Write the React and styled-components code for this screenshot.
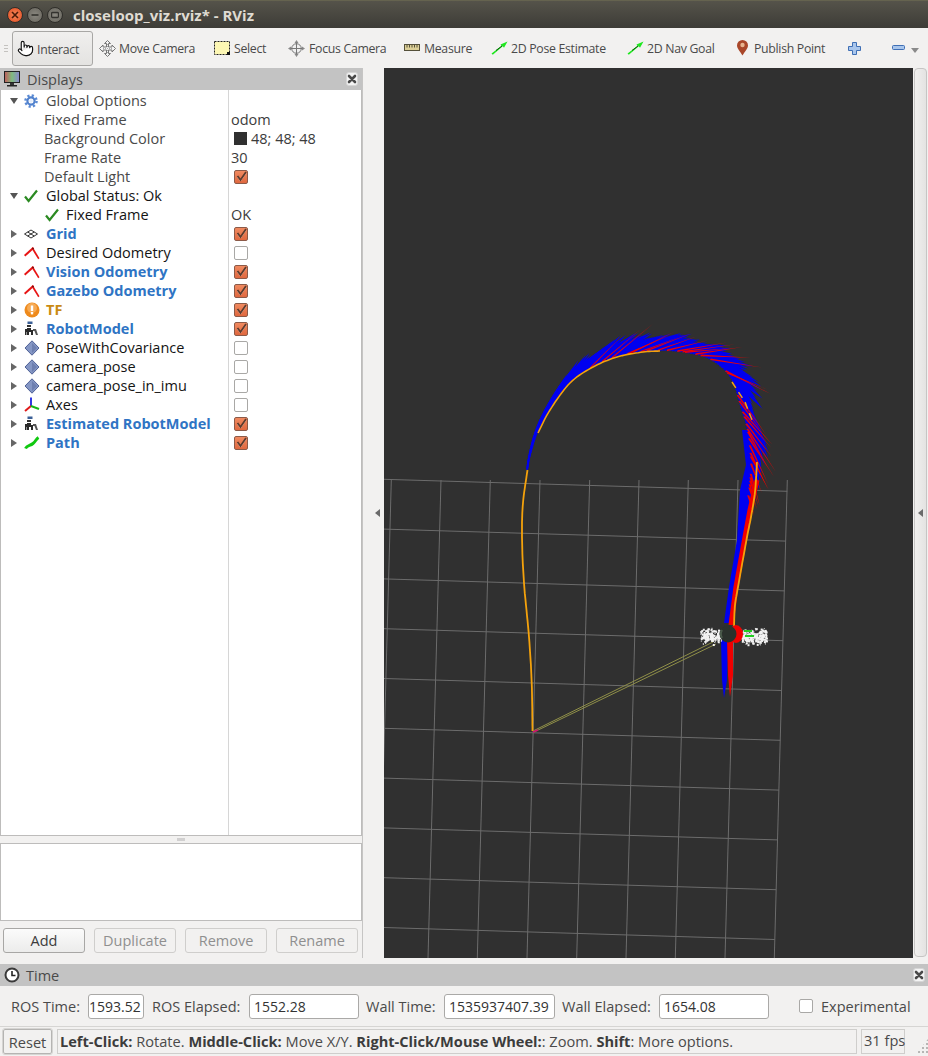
import React from "react";
import styled, { createGlobalStyle } from "styled-components";
import { Pointer } from "lucide-react";

const FONT = `"Open Sans", "Noto Sans", "Liberation Sans", sans-serif`;

const GlobalStyle = createGlobalStyle`
  html, body { margin: 0; padding: 0; background: #f2f1f0; }
  body { font-family: ${FONT}; font-size: 14.5px; color: #3c3c3c; }
`;

/* ---------- small drawn icons ---------- */

const Svg = ({ w = 14, h = 14, children }) => (
  <svg width={w} height={h} viewBox={`0 0 ${w} ${h}`} style={{ display: "block", flex: "none" }}>
    {children}
  </svg>
);

const CloseGlyph = () => (
  <Svg w={12} h={12}>
    <path d="M3 3l6 6M9 3l-6 6" stroke="#4a4a4a" strokeWidth="2.6" strokeLinecap="round" />
  </Svg>
);

const MonitorIcon = () => (
  <Svg w={17} h={17}>
    <defs>
      <linearGradient id="scr" x1="0" x2="1" y1="0" y2="0">
        <stop offset="0" stopColor="#c25b5b" />
        <stop offset="0.5" stopColor="#7fbb7f" />
        <stop offset="1" stopColor="#8a86d0" />
      </linearGradient>
    </defs>
    <rect x="0.5" y="0.5" width="15" height="11" fill="url(#scr)" stroke="#222" />
    <rect x="6" y="12" width="4" height="2" fill="#333" />
    <rect x="3" y="14" width="10" height="1.5" fill="#222" />
  </Svg>
);

const GearIcon = () => (
  <Svg>
    <circle cx="7" cy="7" r="5.6" fill="none" stroke="#5a8ad4" strokeWidth="2.4" strokeDasharray="2.2 2.2" />
    <circle cx="7" cy="7" r="3.6" fill="none" stroke="#4f80cc" strokeWidth="2.2" />
    <circle cx="7" cy="7" r="1.8" fill="#e4ecf9" />
  </Svg>
);

const TickIcon = () => (
  <Svg>
    <path d="M1 7.5l3.6 4.5L13 1.5" fill="none" stroke="#2b8a22" strokeWidth="2.2" />
  </Svg>
);

const GridIcon = () => (
  <Svg>
    <path d="M0.5 7L7 3l6.5 4L7 11zM3.7 5l6.5 4M10.2 5L3.7 9" fill="#fff" stroke="#333" strokeWidth="1" />
  </Svg>
);

const OdomIcon = () => (
  <Svg w={16} h={14}>
    <path d="M0 9L8.800 1l1.400 1.600L1.300 10.600z" fill="#e81414" />
    <path d="M8.800 1l6.700 11.300-1.300 1L7.800 3z" fill="#e81414" />
    <path d="M8 2.500l1-1 1 1.500-1 .6z" fill="#5a1010" />
  </Svg>
);

const WarnIcon = () => (
  <Svg w={16} h={16}>
    <circle cx="8" cy="8" r="7.5" fill="#ee8a1c" />
    <circle cx="8" cy="6" r="5" fill="#f6aa55" />
    <rect x="6.8" y="3.5" width="2.4" height="5.5" fill="#fff" />
    <rect x="6.8" y="10" width="2.4" height="2.4" fill="#fff" />
  </Svg>
);

const RobotIcon = () => (
  <Svg w={16} h={15}>
    <rect x="3.5" y="0.5" width="5" height="2.5" fill="#3a5f96" />
    <rect x="3" y="4" width="4" height="2" fill="#333" />
    <path d="M1 14V8h2v-1h4v2h2v5H7v-3H5v3H3v-3H2.500v3z" fill="#2a2a2a" />
    <path d="M9 8h3l2 6h-2l-1.500-4H9z" fill="#555" />
  </Svg>
);

const PoseIcon = () => (
  <Svg w={16} h={16}>
    <path d="M8 0.800L15 8l-7 7.200L1 8z" fill="#8496c4" stroke="#4f6196" />
    <path d="M8 3l5 5-5 5z" fill="#6d7fb0" />
  </Svg>
);

const AxesIcon = () => (
  <Svg w={16} h={16}>
    <path d="M7 0.500V9" stroke="#1a22e0" strokeWidth="1.800" />
    <path d="M7 9L1 14" stroke="#e01a1a" strokeWidth="2" />
    <path d="M7 9l8 3" stroke="#18b818" strokeWidth="2" />
  </Svg>
);

const PathIcon = () => (
  <Svg w={16} h={14}>
    <path d="M1.500 12.500C3 9 6 10 9 7.500S12 3 14.500 1.500" fill="none" stroke="#10c810" strokeWidth="3" />
  </Svg>
);

const MoveIcon = () => (
  <Svg w={17} h={17}>
    <path
      d="M8.500 0.500l3 3h-2v3.500H13V5l3.500 3.500L13 12v-2H9.500v3.500h2l-3 3-3-3h2V10H4v2L0.500 8.500 4 5v2h3.500V3.500h-2z"
      fill="#f4f4f4"
      stroke="#777"
    />
    <path d="M8.500 4v9M4 8.500h9" stroke="#aaa" strokeDasharray="1 1" />
  </Svg>
);

const SelectIcon = () => (
  <Svg w={17} h={15}>
    <rect x="0.500" y="0.500" width="15" height="13" fill="#fdf7b4" stroke="#222" strokeDasharray="2 1" />
    <rect x="13" y="11" width="3" height="3" fill="#111" />
  </Svg>
);

const FocusIcon = () => (
  <Svg w={17} h={17}>
    <path d="M8.500 0l2 3h-4zM8.500 17l2-3h-4zM0 8.500l3-2v4zM17 8.500l-3-2v4z" fill="#8a8a8a" />
    <circle cx="8.500" cy="8.500" r="4.800" fill="#eee" stroke="#777" />
    <path d="M8.500 2.500v12M2.500 8.500h12" stroke="#777" />
  </Svg>
);

const RulerIcon = () => (
  <Svg w={17} h={8}>
    <rect x="0.500" y="0.500" width="15" height="6" fill="#dccf97" stroke="#55503a" />
    <path d="M3 1v2.500M5.500 1v2.500M8 1v2.500M10.500 1v2.500M13 1v2.500" stroke="#55503a" />
  </Svg>
);

const GoalIcon = () => (
  <Svg w={17} h={14}>
    <path d="M0.500 12.500L10.500 5 9.500 3.500l7-3-3.500 6.300L11.800 5.300 1.800 13.800z" fill="#1fe81f" />
    <path d="M5 9.500l6-4.500" stroke="#0a5a0a" strokeWidth="1" />
  </Svg>
);

const PinIcon = () => (
  <Svg w={13} h={16}>
    <path d="M6.500 15.500C4 11 1 8.500 1 5.500a5.500 5.500 0 0 1 11 0c0 3-3 5.500-5.500 10z" fill="#a9472a" />
    <circle cx="6.500" cy="5" r="2.200" fill="#e8b48f" />
  </Svg>
);

const PlusIcon = () => (
  <Svg w={13} h={13}>
    <path d="M4.500 0.500h4v4h4v4h-4v4h-4v-4h-4v-4h4z" fill="#a9c6ec" stroke="#3f6fb5" />
  </Svg>
);

const MinusIcon = () => (
  <Svg w={13} h={6}>
    <rect x="0.500" y="0.500" width="12" height="4" rx="1" fill="#a9c6ec" stroke="#3f6fb5" />
  </Svg>
);

const ClockIcon = () => (
  <Svg w={16} h={16}>
    <circle cx="8" cy="8" r="6.500" fill="#fff" stroke="#3a3a3a" strokeWidth="2" />
    <path d="M8 4v4.500h3.500" fill="none" stroke="#222" strokeWidth="1.600" />
  </Svg>
);

/* ---------- 3D view drawing ---------- */

const GRID_X_TOP = [391.3, 441, 490.3, 540, 589.7, 639, 688.3, 738, 787.3];
const GRID_ROWS = [0, 1, 2, 3, 4, 5, 6, 7, 8, 9];

// spine of the odometry trail, from the grid edge over the arc
const SPINE = [
  [528, 470], [531, 455], [538, 433], [550, 410], [570, 383], [593, 367], [617, 357], [643, 352],
  [660, 351], [685, 353], [710, 360], [730, 378], [740, 407], [747, 432], [750, 467], [747, 497],
];

const smooth = (pts, n = 10) => {
  const out = [];
  for (let i = 0; i < pts.length - 1; i++) {
    const p0 = pts[Math.max(i - 1, 0)];
    const p1 = pts[i];
    const p2 = pts[i + 1];
    const p3 = pts[Math.min(i + 2, pts.length - 1)];
    for (let k = 0; k < n; k++) {
      const t = k / n;
      const f = (a, b, c, d) =>
        0.5 * (2 * b + (c - a) * t + (2 * a - 5 * b + 4 * c - d) * t * t + (3 * b - a - 3 * c + d) * t * t * t);
      out.push([f(p0[0], p1[0], p2[0], p3[0]), f(p0[1], p1[1], p2[1], p3[1])]);
    }
  }
  out.push(pts[pts.length - 1]);
  return out;
};

const toPoints = (pts) => pts.map((p) => `${p[0].toFixed(1)},${p[1].toFixed(1)}`).join(" ");

let seed = 4711;
const rnd = () => {
  seed = (seed * 16807) % 2147483647;
  return seed / 2147483647;
};

const spinePts = smooth(SPINE);
const blueFeathers = [];
const redFeathers = [];
spinePts.forEach((p, i) => {
  const q = spinePts[Math.min(i + 1, spinePts.length - 1)];
  const r = spinePts[Math.max(i - 1, 0)];
  const heading = Math.atan2(q[1] - r[1], q[0] - r[0]);
  const u = i / (spinePts.length - 1);
  const grow = Math.min(1, (u / 0.34) ** 1.5);
  const fade = u > 0.85 ? 1 - ((u - 0.85) / 0.15) * 0.55 : 1;
  const feather = (len, deg, wid) => {
    const a = heading - (deg * Math.PI) / 180;
    const tip = [p[0] + Math.cos(a) * len, p[1] + Math.sin(a) * len];
    const nx = Math.cos(heading - Math.PI / 2) * wid;
    const ny = Math.sin(heading - Math.PI / 2) * wid;
    return toPoints([[p[0], p[1]], [p[0] + nx, p[1] + ny], tip]);
  };
  blueFeathers.push(feather((12 + 26 * grow) * fade * (0.75 + rnd() * 0.4), (6 + 14 * grow) * fade, 2 + 7 * grow));
  if (u > 0.3 && rnd() < 0.14 + u * u * 0.3) {
    const late = u > 0.66;
    redFeathers.push(feather((38 + rnd() * 16) * fade, (late ? 20 : 13) + rnd() * 9, 0.8 + u * 1.4));
  }
});

const cloud = [];
for (let i = 0; i < 420; i++) {
  const left = i % 5 < 2;
  const x = left ? 700 + rnd() * 21 : 741 + rnd() * 25;
  const y = 636 + (rnd() + rnd() - 1) * 9;
  cloud.push([x, y, rnd() < 0.55 ? 2 : 1]);
}

const ORANGE_LEFT = smooth([[532.5, 731], [531.7, 683], [529, 637], [524, 583], [522, 537], [523, 503], [527.5, 470]]);
const ORANGE_ARC = smooth(SPINE.slice(2, 9));
const ORANGE_RIGHT = smooth([[757, 462], [755, 492], [751, 517], [747, 537], [738, 587], [735, 605], [734, 626]]);

const Scene = () => (
  <svg width="529" height="890" viewBox="384 68 529 890" style={{ display: "block" }}>
    <g stroke="#777" strokeWidth="1" opacity="0.85">
      {GRID_ROWS.map((i) => (
        <line key={`h${i}`} x1="384" y1={479.3 + 49.8 * i} x2={787.3 - 1.4 * i} y2={491.3 + 49.8 * i} />
      ))}
      {GRID_X_TOP.map((x) => (
        <line key={`v${x}`} x1={x} y1="480" x2={x - 13} y2="958" />
      ))}
    </g>

    <polyline points={toPoints(ORANGE_LEFT)} fill="none" stroke="#f4a20c" strokeWidth="1.800" />

    {blueFeathers.map((pts, i) => <polygon key={`b${i}`} points={pts} fill="#0000f0" />)}
    <polygon
      points="742,430 756,430 758,465 755,490 747,540 734,587 729,623 724,623 729,587 737,540 740,490 746,465"
      fill="#0000f0"
    />
    {redFeathers.map((pts, i) => <polygon key={`r${i}`} points={pts} fill="#f00000" />)}
    <polyline points="757,480 750,510 745,537 736,587 731,625" fill="none" stroke="#f00000" strokeWidth="5" />

    <polyline points={toPoints(ORANGE_ARC)} fill="none" stroke="#f4a20c" strokeWidth="1.600" />
    <polyline points="732,382 745,402 752,420" fill="none" stroke="#f4a20c" strokeWidth="1.500" strokeDasharray="7 5" />
    <polyline points={toPoints(ORANGE_RIGHT)} fill="none" stroke="#f4a20c" strokeWidth="1.800" />

    <polygon points="721,640 728,640 727,680 724,698 722,680" fill="#0000f0" />
    <polygon points="727,640 733,640 733,675 730,697 728,675" fill="#f00000" />

    <polyline points="533,731 713,642" stroke="#8f8f48" strokeWidth="1" fill="none" />
    <polyline points="534,732 716,644" stroke="#8f8f48" strokeWidth="1" fill="none" />
    <line x1="533" y1="732" x2="538" y2="730" stroke="#d01070" strokeWidth="1.500" />

    {cloud.map(([x, y, s], i) => <rect key={`c${i}`} x={x} y={y} width={s} height={s} fill="#f2f2f2" />)}
    <rect x="744" y="630" width="8" height="2" fill="#22cc22" />
    <rect x="745" y="635" width="9" height="2" fill="#22cc22" />
    <ellipse cx="736" cy="634" rx="7" ry="9" fill="#f00000" />
    <circle cx="728" cy="634" r="8.500" fill="#2b312c" />
    <path d="M722 630a8 8 0 0 0 0 8" fill="none" stroke="#4a5a4a" strokeWidth="2" />
  </svg>
);

/* ---------- data ---------- */

const TOOLS = [
  { w: 115, icon: <MoveIcon />, text: "Move Camera", gap: 3 },
  { w: 74, icon: <SelectIcon />, text: "Select", gap: 3 },
  { w: 116, icon: <FocusIcon />, text: "Focus Camera", gap: 4 },
  { w: 87, icon: <RulerIcon />, text: "Measure", gap: 3 },
  { w: 136, icon: <GoalIcon />, text: "2D Pose Estimate", gap: 3 },
  { w: 109, icon: <GoalIcon />, text: "2D Nav Goal", gap: 3 },
  { w: 112, icon: <PinIcon />, text: "Publish Point", gap: 5 },
];

const ROWS = [
  { open: true, icon: <GearIcon />, label: "Global Options" },
  { plain: true, label: "Fixed Frame", value: "odom" },
  { plain: true, label: "Background Color", color: "#303030", value: "48; 48; 48" },
  { plain: true, label: "Frame Rate", value: "30" },
  { plain: true, label: "Default Light", check: true },
  { open: true, icon: <TickIcon />, label: "Global Status: Ok", tone: "dark" },
  { nested: true, icon: <TickIcon />, label: "Fixed Frame", value: "OK", tone: "dark" },
  { icon: <GridIcon />, label: "Grid", tone: "blue", check: true },
  { icon: <OdomIcon />, label: "Desired Odometry", tone: "dark", check: false },
  { icon: <OdomIcon />, label: "Vision Odometry", tone: "blue", check: true },
  { icon: <OdomIcon />, label: "Gazebo Odometry", tone: "blue", check: true },
  { icon: <WarnIcon />, label: "TF", tone: "warn", check: true },
  { icon: <RobotIcon />, label: "RobotModel", tone: "blue", check: true },
  { icon: <PoseIcon />, label: "PoseWithCovariance", tone: "dark", check: false },
  { icon: <PoseIcon />, label: "camera_pose", tone: "dark", check: false },
  { icon: <PoseIcon />, label: "camera_pose_in_imu", tone: "dark", check: false },
  { icon: <AxesIcon />, label: "Axes", tone: "dark", check: false },
  { icon: <RobotIcon />, label: "Estimated RobotModel", tone: "blue", check: true },
  { icon: <PathIcon />, label: "Path", tone: "blue", check: true },
];

const TIME_FIELDS = [
  { label: "ROS Time:", value: "1593.52", w: 56, pad: 0, lw: 77, after: 8 },
  { label: "ROS Elapsed:", value: "1552.28", w: 110, pad: 4, lw: 97, after: 7 },
  { label: "Wall Time:", value: "1535937407.39", w: 111, pad: 4, lw: 78, after: 7 },
  { label: "Wall Elapsed:", value: "1654.08", w: 110, pad: 4, lw: 97, after: 7 },
];

const TONES = { blue: "#2f74c4", warn: "#c98a14", dark: "#141414", soft: "#4a4a4a" };

/* ---------- components ---------- */

export default function App() {
  return (
    <Page>
      <GlobalStyle />
      <TitleBar>
        <WinCircle $close><Svg w={8} h={8}><path d="M1 1l6 6M7 1L1 7" stroke="#4a1a08" strokeWidth="1.600" /></Svg></WinCircle>
        <WinCircle><Svg w={8} h={8}><path d="M0.500 4h7" stroke="#33322e" strokeWidth="1.600" /></Svg></WinCircle>
        <WinCircle><Svg w={8} h={8}><rect x="0.500" y="1.500" width="7" height="5" rx="1" fill="none" stroke="#33322e" strokeWidth="1.300" /></Svg></WinCircle>
        <WinTitle>closeloop_viz.rviz* - RViz</WinTitle>
      </TitleBar>

      <Toolbar>
        <Grip />
        <ActiveTool>
          <Pointer size={17} color="#111" fill="#fff" strokeWidth={1.6} />
          <span>Interact</span>
        </ActiveTool>
        {TOOLS.map((t) => (
          <ToolItem key={t.text} $w={t.w} $gap={t.gap}>
            {t.icon}
            <span>{t.text}</span>
          </ToolItem>
        ))}
        <PlusSlot><PlusIcon /></PlusSlot>
        <MinusSlot>
          <MinusIcon />
          <MenuArrow />
        </MinusSlot>
      </Toolbar>

      <Body>
        <LeftPanel>
          <DockHeader>
            <MonitorIcon />
            <DockTitle>Displays</DockTitle>
            <CloseBtn><CloseGlyph /></CloseBtn>
          </DockHeader>
          <Tree>
            {ROWS.map((r, i) => (
              <Row key={i}>
                <NameCell $pad={r.plain ? 44 : r.nested ? 45 : 9}>
                  {!r.plain && !r.nested && <ExpanderSlot><Expander $open={r.open} /></ExpanderSlot>}
                  {r.icon && <IconSlot $nested={r.nested}>{r.icon}</IconSlot>}
                  <Label $tone={r.tone} $nested={r.nested} $plain={r.plain}>{r.label}</Label>
                </NameCell>
                <ValueCell>
                  {r.color && <Swatch $color={r.color} />}
                  {r.value && <span>{r.value}</span>}
                  {r.check === true && <CheckOn />}
                  {r.check === false && <CheckOff />}
                </ValueCell>
              </Row>
            ))}
          </Tree>
          <SplitHandle />
          <Description />
          <ButtonRow>
            <PushButton>Add</PushButton>
            <PushButton $off>Duplicate</PushButton>
            <PushButton $off>Remove</PushButton>
            <PushButton $off>Rename</PushButton>
          </ButtonRow>
        </LeftPanel>

        <Gutter><ArrowLeft /></Gutter>
        <Viewport><Scene /></Viewport>
        <SideRail><ArrowLeft /></SideRail>
      </Body>

      <DockHeader>
        <ClockIcon />
        <DockTitle>Time</DockTitle>
        <CloseBtn><CloseGlyph /></CloseBtn>
      </DockHeader>

      <TimeRow>
        {TIME_FIELDS.map((f) => (
          <React.Fragment key={f.label}>
            <TimeLabel $w={f.lw}>{f.label}</TimeLabel>
            <Field $w={f.w} $pad={f.pad} $after={f.after}>{f.value}</Field>
          </React.Fragment>
        ))}
        <ExperimentalBox />
        <span>Experimental</span>
      </TimeRow>

      <StatusBar>
        <ResetBtn>Reset</ResetBtn>
        <StatusText>
          <b>Left-Click:</b> Rotate. <b>Middle-Click:</b> Move X/Y. <b>Right-Click/Mouse Wheel:</b>: Zoom. <b>Shift</b>: More options.
        </StatusText>
        <Fps>31 fps</Fps>
        <SizeGrip />
      </StatusBar>
    </Page>
  );
}

const Page = styled.div`
  width: 928px;
  height: 1056px;
  display: grid;
  grid-template-rows: 28px 40px 896px 22px 40px 30px;
  overflow: hidden;
  background: #f2f1f0;
`;

const TitleBar = styled.div`
  display: flex;
  align-items: center;
  padding-left: 7px;
  background: linear-gradient(#55534a, #3d3c37);
  border-top: 1px solid #65634f;
  box-sizing: border-box;
`;

const WinCircle = styled.div`
  width: 16px;
  height: 16px;
  margin-right: 4px;
  border-radius: 50%;
  display: flex;
  align-items: center;
  justify-content: center;
  background: ${(p) => (p.$close ? "radial-gradient(#f58b5c, #e2491f)" : "radial-gradient(#8a8880, #66645c)")};
  border: 1px solid #2f2e2a;
  box-sizing: border-box;
`;

const WinTitle = styled.div`
  margin-left: 6px;
  font-weight: 700;
  font-size: 15px;
  color: #dfdbd2;
`;

const Toolbar = styled.div`
  display: flex;
  align-items: center;
  background: #f2f1f0;
`;

const Grip = styled.div`
  width: 4px;
  height: 8px;
  margin: 2px 4px 0 4px;
  background: repeating-linear-gradient(#c4c2bf 0 1px, transparent 1px 3px);
`;

const ActiveTool = styled.div`
  box-sizing: border-box;
  width: 81px;
  height: 35px;
  margin-top: 1px;
  margin-right: 6px;
  display: flex;
  align-items: center;
  gap: 3px;
  padding-left: 4px;
  border: 1px solid #a8a7a5;
  border-radius: 3px;
  background: linear-gradient(#f0efee, #e4e3e1);
  font-size: 12.3px;
  letter-spacing: -0.3px;
  color: #4a4a4a;
  span { padding-top: 2px; }
`;

const ToolItem = styled.div`
  flex: none;
  width: ${(p) => p.$w}px;
  display: flex;
  align-items: center;
  gap: ${(p) => p.$gap}px;
  font-size: 12.3px;
  letter-spacing: -0.3px;
  color: #4a4a4a;
  white-space: nowrap;
`;

const PlusSlot = styled.div`
  width: 44px;
  display: flex;
  align-items: center;
`;

const MinusSlot = styled.div`
  display: flex;
  align-items: center;
  gap: 6px;
`;

const MenuArrow = styled.div`
  width: 0;
  height: 0;
  margin-top: 5px;
  border-left: 4px solid transparent;
  border-right: 4px solid transparent;
  border-top: 5px solid #8a8a8a;
`;

const Body = styled.div`
  display: flex;
  height: 896px;
`;

const LeftPanel = styled.div`
  width: 362px;
  flex: none;
  display: flex;
  flex-direction: column;
`;

const DockHeader = styled.div`
  height: 22px;
  flex: none;
  display: flex;
  align-items: center;
  padding: 0 4px;
  background: #c3c3c3;
`;

const DockTitle = styled.div`
  margin-left: 6px;
  flex: 1;
  font-size: 14.5px;
  color: #4a4a4a;
`;

const CloseBtn = styled.div`
  width: 12px;
  height: 14px;
  display: flex;
  align-items: center;
  justify-content: center;
  background: #f4f4f4;
  border-radius: 3px;
  border: 1px solid #d6d6d6;
  box-sizing: border-box;
`;

const Tree = styled.div`
  box-sizing: border-box;
  height: 746px;
  flex: none;
  padding-top: 1px;
  border: 1px solid #bdbcbb;
  border-top: 0;
  background: linear-gradient(#d6d6d6, #d6d6d6) 227px 0 / 1px 100% no-repeat #fff;
`;

const Row = styled.div`
  height: 19px;
  display: grid;
  grid-template-columns: 227px 1fr;
`;

const NameCell = styled.div`
  display: flex;
  align-items: center;
  padding-left: ${(p) => p.$pad - 1}px;
  white-space: nowrap;
`;

const ExpanderSlot = styled.div`
  width: 9px;
  flex: none;
  display: flex;
  justify-content: center;
`;

const Expander = styled.div`
  width: 0;
  height: 0;
  ${(p) =>
    p.$open
      ? `border-left: 4.5px solid transparent; border-right: 4.5px solid transparent; border-top: 6px solid #555;`
      : `border-top: 4.5px solid transparent; border-bottom: 4.5px solid transparent; border-left: 6px solid #666;`}
`;

const IconSlot = styled.div`
  width: 15px;
  margin-left: ${(p) => (p.$nested ? 0 : 6)}px;
  flex: none;
  display: flex;
  justify-content: flex-start;
`;

const Label = styled.div`
  margin-left: ${(p) => (p.$plain ? 0 : p.$nested ? 6 : 7)}px;
  font-size: 14.5px;
  font-weight: ${(p) => (p.$tone === "blue" || p.$tone === "warn" ? 700 : 400)};
  color: ${(p) => TONES[p.$tone] || TONES.soft};
`;

const ValueCell = styled.div`
  display: flex;
  align-items: center;
  padding-left: 3px;
  font-size: 14.5px;
  color: #3c3c3c;
`;

const Swatch = styled.div`
  width: 13px;
  height: 13px;
  margin: 0 4px 0 3px;
  background: ${(p) => p.$color};
`;

const CheckOff = styled.div`
  width: 14px;
  height: 14px;
  margin-left: 3px;
  box-sizing: border-box;
  background: #fff;
  border: 1px solid #a9a8a6;
  border-radius: 2px;
`;

const CheckBox = styled.div`
  width: 14px;
  height: 14px;
  margin-left: 3px;
  box-sizing: border-box;
  display: flex;
  align-items: center;
  justify-content: center;
  background: linear-gradient(#f08a60, #e0683f);
  border: 1px solid #8c5a48;
  border-radius: 2px;
`;

const CheckOn = () => (
  <CheckBox>
    <Svg w={11} h={11}>
      <path d="M1.500 5l3 4L10 1" fill="none" stroke="#f6e0d6" strokeWidth="1" transform="translate(0 1)" />
      <path d="M1.500 5l3 4L10 1" fill="none" stroke="#5c3a2c" strokeWidth="1.800" />
    </Svg>
  </CheckBox>
);

const SplitHandle = styled.div`
  height: 7px;
  flex: none;
  box-sizing: border-box;
  padding: 2px 177px;
  background: radial-gradient(circle, #aaa 0.6px, transparent 0.8px) 0 0 / 2px 2px content-box;
`;

const Description = styled.div`
  height: 78px;
  flex: none;
  box-sizing: border-box;
  background: #fff;
  border: 1px solid #bdbcbb;
`;

const ButtonRow = styled.div`
  display: grid;
  grid-template-columns: repeat(4, 82px);
  gap: 9px;
  padding: 7px 0 0 3px;
`;

const PushButton = styled.div`
  box-sizing: border-box;
  height: 25px;
  display: flex;
  align-items: center;
  justify-content: center;
  font-size: 14.5px;
  border-radius: 3px;
  color: ${(p) => (p.$off ? "#8f8f8f" : "#3c3c3c")};
  border: 1px solid ${(p) => (p.$off ? "#cfcecc" : "#a8a7a5")};
  background: ${(p) => (p.$off ? "#f2f1f0" : "linear-gradient(#fbfbfb, #ececeb)")};
`;

const Gutter = styled.div`
  width: 22px;
  height: 890px;
  flex: none;
  box-sizing: border-box;
  border-left: 1px solid #c6c5c4;
  display: flex;
  align-items: center;
  justify-content: center;
  padding-left: 7px;
`;

const ArrowLeft = styled.div`
  width: 0;
  height: 0;
  border-top: 4px solid transparent;
  border-bottom: 4px solid transparent;
  border-right: 5px solid #6a6a6a;
`;

const Viewport = styled.div`
  width: 529px;
  height: 890px;
  flex: none;
  background: #303030;
`;

const SideRail = styled.div`
  box-sizing: border-box;
  width: 13px;
  height: 889px;
  margin: 0 2px 0 1px;
  display: flex;
  align-items: center;
  justify-content: center;
  background: linear-gradient(90deg, #f0efee, #e4e3e2);
  border: 1px solid #c6c5c4;
  border-radius: 4px;
`;

const TimeRow = styled.div`
  display: flex;
  align-items: center;
  padding-left: 11px;
  font-size: 14.5px;
  color: #4a4a4a;
`;

const TimeLabel = styled.div`
  width: ${(p) => p.$w}px;
  flex: none;
  white-space: nowrap;
`;

const Field = styled.div`
  box-sizing: border-box;
  width: ${(p) => p.$w}px;
  height: 25px;
  margin-right: ${(p) => p.$after}px;
  flex: none;
  display: flex;
  align-items: center;
  padding-left: ${(p) => p.$pad}px;
  background: #fff;
  border: 1px solid #aaa9a7;
  border-radius: 3px;
  color: #333;
  font-size: 14px;
`;

const ExperimentalBox = styled(CheckOff)`
  margin: 0 8px 0 23px;
`;

const StatusBar = styled.div`
  box-sizing: border-box;
  display: flex;
  align-items: stretch;
  gap: 4px;
  padding: 2px 0;
  border-top: 1px solid #d6d5d3;
  font-size: 14.6px;
  color: #4a4a4a;
`;

const ResetBtn = styled.div`
  box-sizing: border-box;
  width: 49px;
  margin: 0 1px 0 3px;
  display: flex;
  align-items: center;
  justify-content: center;
  border: 1px solid #b5b4b2;
  border-radius: 2px;
  outline: 1px solid #d6d5d3;
`;

const StatusText = styled.div`
  box-sizing: border-box;
  width: 800px;
  flex: none;
  padding-left: 2px;
  white-space: pre-wrap;
  border: 1px solid #cfcecc;
  line-height: 23px;
  b { color: #3c3c3c; }
`;

const Fps = styled.div`
  box-sizing: border-box;
  width: 44px;
  flex: none;
  padding-left: 2px;
  line-height: 20px;
  border: 1px solid #cfcecc;
  white-space: nowrap;
`;

const SizeGrip = styled.div`
  flex: 1;
  background: radial-gradient(circle, #b5b4b2 0.7px, transparent 1px) right bottom / 4px 4px;
  clip-path: polygon(100% 35%, 100% 100%, 35% 100%);
`;
